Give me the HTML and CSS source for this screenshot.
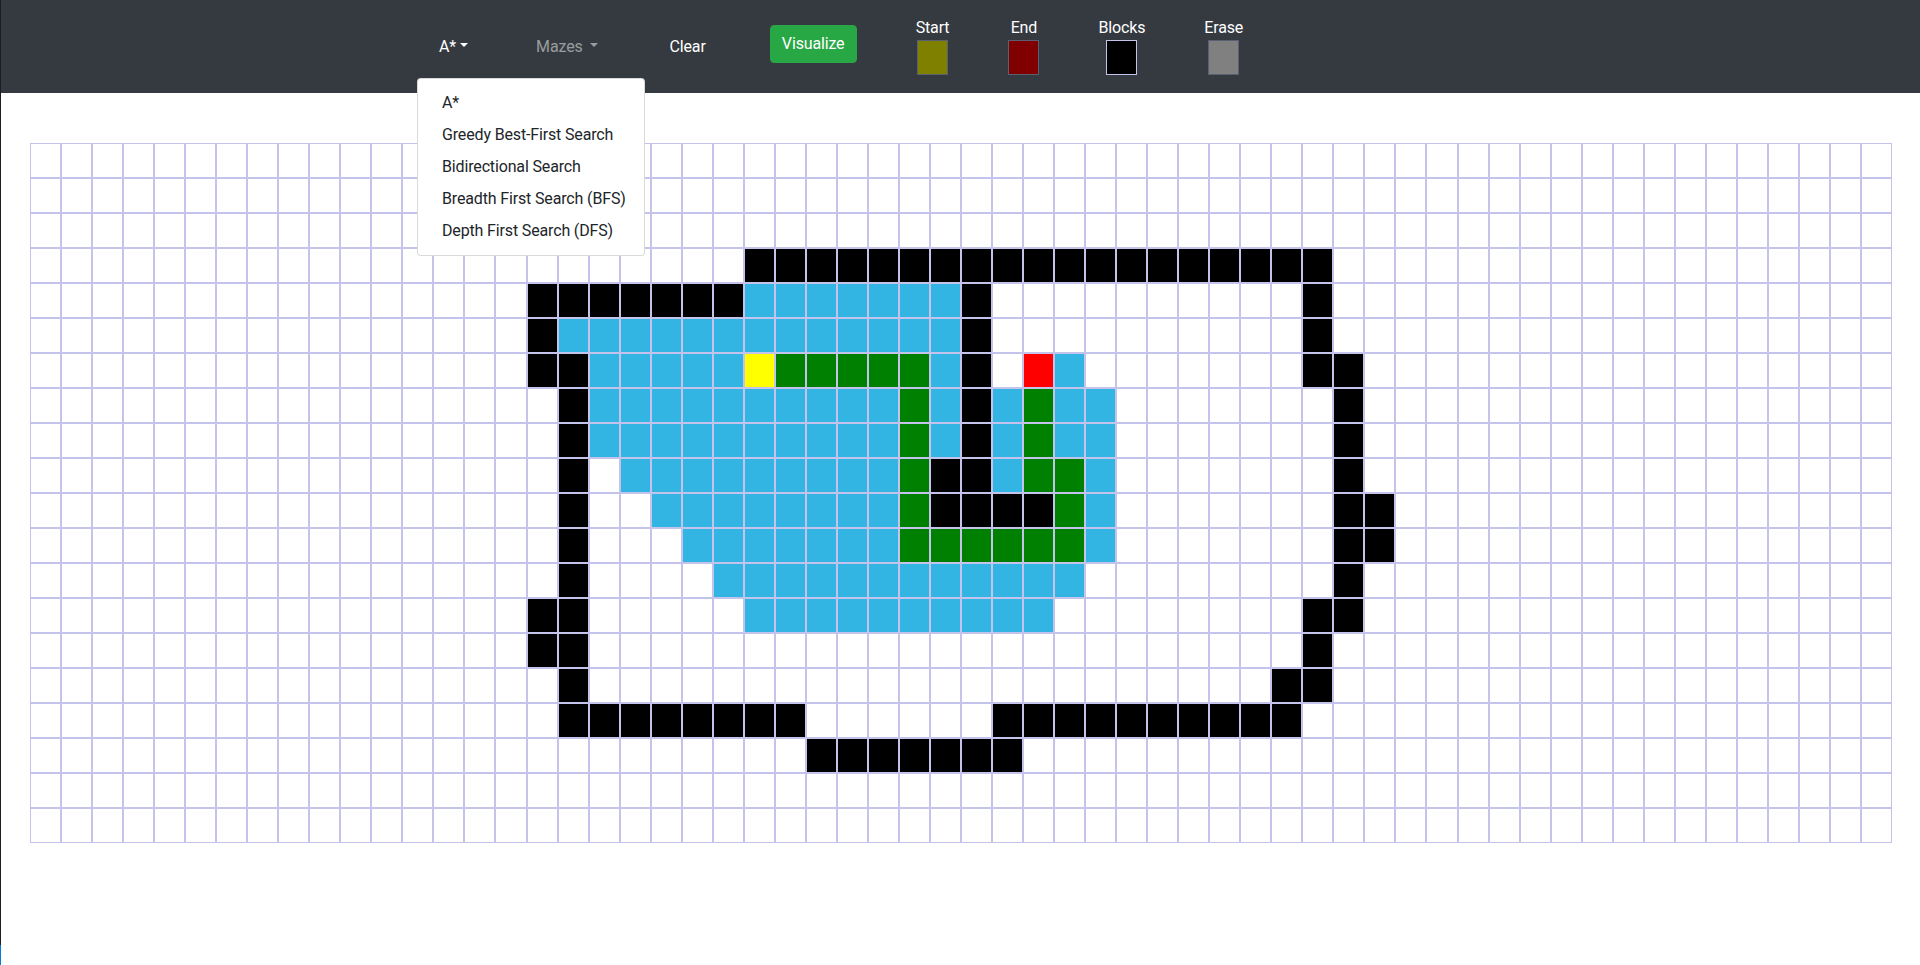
FILE: index.html
```html
<!DOCTYPE html>
<html lang="en">
<head>
<meta charset="utf-8">
<title>Pathfinding Visualizer</title>
<link rel="stylesheet" href="styles.css">
</head>
<body>
<nav class="navbar">
  <ul class="nav-menu">
    <li class="nav-item nav-algo">
      <a class="nav-link nav-link-active">A*<span class="caret"></span></a>
      <div class="dropdown-menu">
        <a class="dropdown-item">A*</a>
        <a class="dropdown-item">Greedy Best-First Search</a>
        <a class="dropdown-item">Bidirectional Search</a>
        <a class="dropdown-item">Breadth First Search (BFS)</a>
        <a class="dropdown-item">Depth First Search (DFS)</a>
      </div>
    </li>
    <li class="nav-item nav-mazes">
      <a class="nav-link nav-link-muted">Mazes <span class="caret"></span></a>
    </li>
    <li class="nav-item nav-clear">
      <a class="nav-link nav-link-active">Clear</a>
    </li>
    <li class="nav-item nav-visualize">
      <button class="btn-visualize" type="button">Visualize</button>
    </li>
    <li class="tools">
      <div class="tool">
        <span class="tool-label">Start</span>
        <span class="swatch swatch-start"></span>
      </div>
      <div class="tool">
        <span class="tool-label">End</span>
        <span class="swatch swatch-end"></span>
      </div>
      <div class="tool">
        <span class="tool-label">Blocks</span>
        <span class="swatch swatch-blocks swatch-selected"></span>
      </div>
      <div class="tool">
        <span class="tool-label">Erase</span>
        <span class="swatch swatch-erase"></span>
      </div>
    </li>
  </ul>
</nav>
<main class="board">
  <div class="grid" id="grid"></div>
</main>
<script src="script.js"></script>
</body>
</html>
```
FILE: styles.css
```css
* {
  box-sizing: border-box;
}

html, body {
  margin: 0;
  padding: 0;
  height: 100%;
}

body {
  font-family: Roboto, "Noto Sans", "Liberation Sans", sans-serif;
  font-size: 16px;
  line-height: 24px;
  letter-spacing: -0.15px;
  color: #212529;
  background: #ffffff;
}

body::before {
  content: "";
  position: fixed;
  left: 0;
  top: 0;
  bottom: 0;
  width: 1px;
  background: #1e1e1e;
  z-index: 20;
}

body::after {
  content: "";
  position: fixed;
  left: 0;
  bottom: 0;
  width: 1px;
  height: 20px;
  background: #0a7ad4;
  z-index: 21;
}

/* ---------- navbar ---------- */
.navbar {
  height: 93px;
  background: #343a40;
}

.nav-menu {
  list-style: none;
  margin: 0;
  padding: 0 0 0 431px;
  height: 100%;
  display: flex;
  align-items: center;
}

.nav-item {
  position: relative;
  display: flex;
  align-items: center;
}

.nav-algo {
  align-self: stretch;
}

.nav-mazes {
  margin-left: 52px;
}

.nav-clear {
  margin-left: 55px;
}

.nav-visualize {
  align-self: flex-start;
  margin-top: 25px;
  margin-left: 56px;
}

.nav-link {
  display: block;
  padding: 8px 8px;
  line-height: 24px;
  text-decoration: none;
  cursor: pointer;
  white-space: pre;
}

.nav-link-active {
  color: #ffffff;
}

.nav-link-muted {
  color: rgba(255, 255, 255, 0.5);
}

.caret {
  display: inline-block;
  margin-left: 0.255em;
  vertical-align: 0.255em;
  border-top: 0.3em solid;
  border-right: 0.3em solid transparent;
  border-left: 0.3em solid transparent;
}

.btn-visualize {
  display: block;
  width: 87px;
  font-family: inherit;
  font-size: 16px;
  line-height: 24px;
  letter-spacing: -0.15px;
  text-align: center;
  color: #ffffff;
  background: #28a745;
  border: 1px solid #28a745;
  border-radius: 4px;
  padding: 6px 0;
  cursor: pointer;
}

/* ---------- dropdown ---------- */
.dropdown-menu {
  position: absolute;
  top: 78px;
  left: -14px;
  z-index: 10;
  width: 228px;
  padding: 8px 0;
  background: #ffffff;
  border: 1px solid rgba(0, 0, 0, 0.15);
  border-radius: 4px;
}

.dropdown-item {
  display: block;
  padding: 4px 24px;
  line-height: 24px;
  color: #212529;
  white-space: nowrap;
  text-decoration: none;
}

/* ---------- tools ---------- */
.tools {
  display: flex;
  gap: 59px;
  align-self: flex-start;
  margin-top: 16px;
  margin-left: 59px;
}

.tool {
  display: flex;
  flex-direction: column;
  align-items: center;
  min-width: 31px;
}

.tool-label {
  color: #ffffff;
  line-height: 24px;
}

.swatch {
  display: block;
  width: 31px;
  height: 35px;
  border: 1px solid #5b5f72;
}

.swatch-start {
  background: #808000;
}

.swatch-end {
  background: #800000;
}

.swatch-blocks {
  background: #000000;
}

.swatch-erase {
  background: #808080;
}

.swatch-selected {
  border-color: #c3c3ec;
}

/* ---------- grid ---------- */
.board {
  padding: 50px 0 0 30px;
}

.grid {
  width: 1862px;
  display: grid;
  grid-template-columns: repeat(60, 1fr);
  grid-auto-rows: 35px;
}

.cell {
  border: 1px solid #c3c3ec;
  background: #ffffff;
}

.cell-wall {
  background: #000000;
}

.cell-visited {
  background: #33b5e4;
}

.cell-path {
  background: #008000;
}

.cell-start {
  background: #ffff00;
}

.cell-end {
  background: #ff0000;
}
```
FILE: script.js
```js
(function () {
  var COLS = 60;
  var ROWS = 20;
  var runs = {
    3: [[23, 41, 'wall']],
    4: [[16, 22, 'wall'], [23, 29, 'visited'], [30, 30, 'wall'], [41, 41, 'wall']],
    5: [[16, 16, 'wall'], [17, 29, 'visited'], [30, 30, 'wall'], [41, 41, 'wall']],
    6: [[16, 17, 'wall'], [18, 22, 'visited'], [23, 23, 'start'], [24, 28, 'path'], [29, 29, 'visited'], [30, 30, 'wall'], [32, 32, 'end'], [33, 33, 'visited'], [41, 42, 'wall']],
    7: [[17, 17, 'wall'], [18, 27, 'visited'], [28, 28, 'path'], [29, 29, 'visited'], [30, 30, 'wall'], [31, 31, 'visited'], [32, 32, 'path'], [33, 34, 'visited'], [42, 42, 'wall']],
    8: [[17, 17, 'wall'], [18, 27, 'visited'], [28, 28, 'path'], [29, 29, 'visited'], [30, 30, 'wall'], [31, 31, 'visited'], [32, 32, 'path'], [33, 34, 'visited'], [42, 42, 'wall']],
    9: [[17, 17, 'wall'], [19, 27, 'visited'], [28, 28, 'path'], [29, 30, 'wall'], [31, 31, 'visited'], [32, 33, 'path'], [34, 34, 'visited'], [42, 42, 'wall']],
    10: [[17, 17, 'wall'], [20, 27, 'visited'], [28, 28, 'path'], [29, 32, 'wall'], [33, 33, 'path'], [34, 34, 'visited'], [42, 43, 'wall']],
    11: [[17, 17, 'wall'], [21, 27, 'visited'], [28, 33, 'path'], [34, 34, 'visited'], [42, 43, 'wall']],
    12: [[17, 17, 'wall'], [22, 33, 'visited'], [42, 42, 'wall']],
    13: [[16, 17, 'wall'], [23, 32, 'visited'], [41, 42, 'wall']],
    14: [[16, 17, 'wall'], [41, 41, 'wall']],
    15: [[17, 17, 'wall'], [40, 41, 'wall']],
    16: [[17, 24, 'wall'], [31, 40, 'wall']],
    17: [[25, 31, 'wall']]
  };

  var grid = document.getElementById('grid');
  var frag = document.createDocumentFragment();
  for (var r = 0; r < ROWS; r++) {
    var rowRuns = runs[r] || [];
    for (var c = 0; c < COLS; c++) {
      var type = '';
      for (var i = 0; i < rowRuns.length; i++) {
        if (c >= rowRuns[i][0] && c <= rowRuns[i][1]) {
          type = rowRuns[i][2];
        }
      }
      var cell = document.createElement('div');
      cell.className = type ? 'cell cell-' + type : 'cell';
      frag.appendChild(cell);
    }
  }
  grid.appendChild(frag);
})();
```
